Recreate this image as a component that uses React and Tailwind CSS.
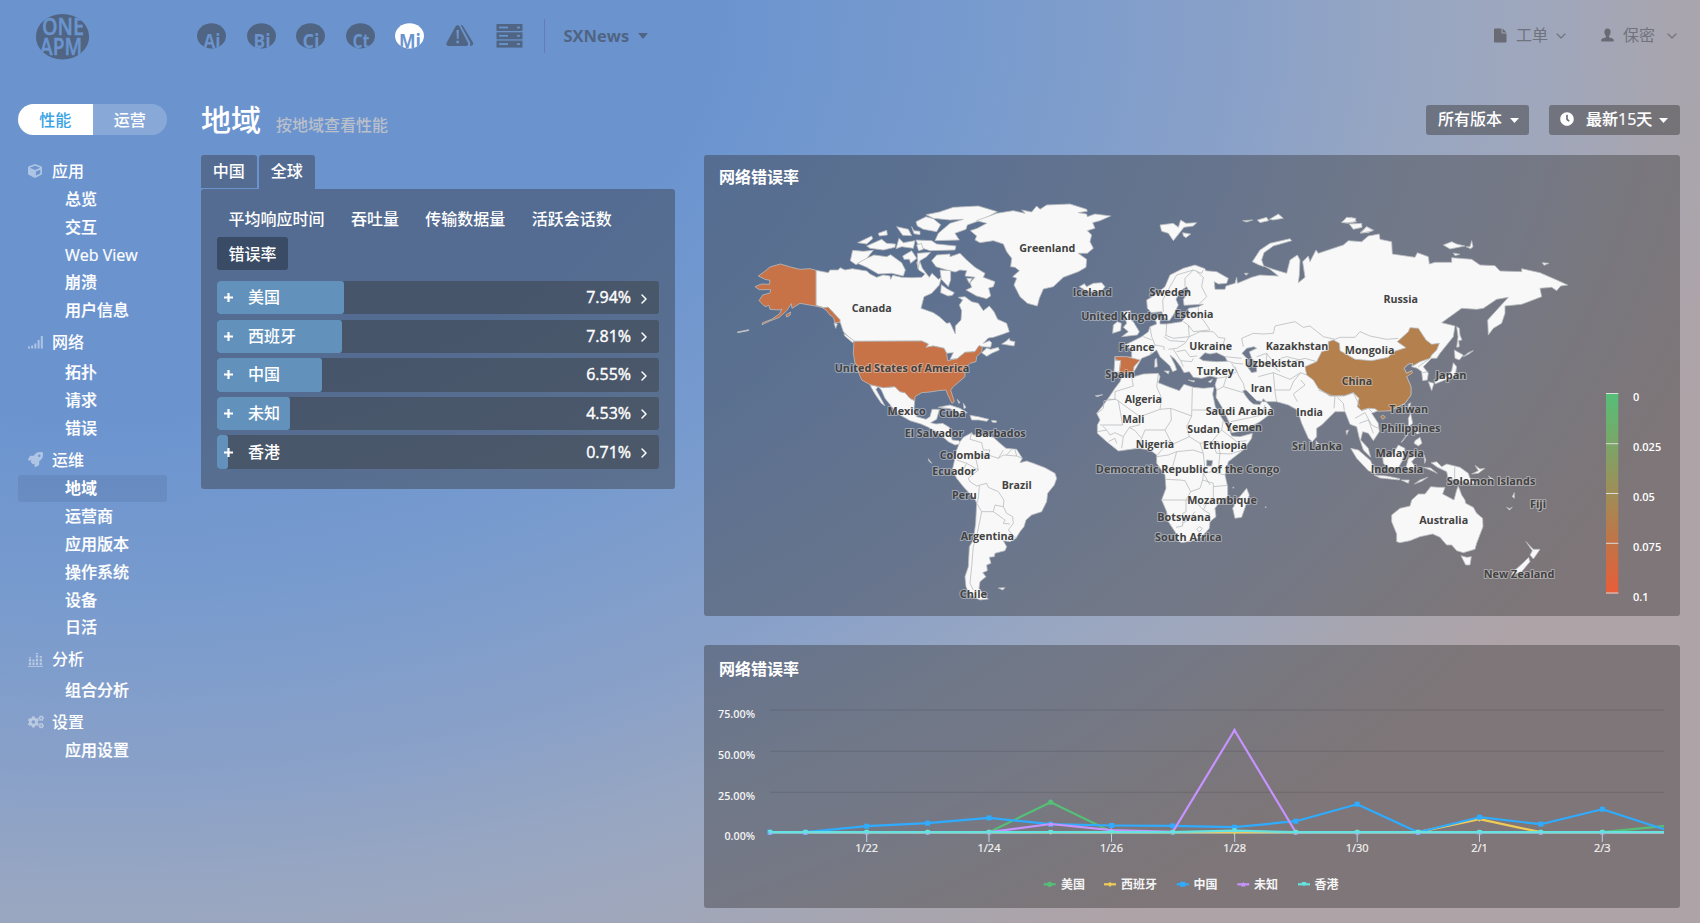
import React from "react";
import { FaCube, FaRocket, FaCogs, FaClock } from "react-icons/fa";
import { ChevronDown, ChevronRight } from "lucide-react";

const FONT = "font-['Open_Sans','Noto_Sans_CJK_SC',sans-serif]";

function Logo() {
  return (
    <svg width="54" height="48" viewBox="35 13 54 48" className="shrink-0">
      <defs>
        <clipPath id="logoClip">
          <ellipse cx="62.5" cy="36.7" rx="26.6" ry="22.8" />
        </clipPath>
      </defs>
      <ellipse cx="62.5" cy="36.7" rx="26.6" ry="22.8" fill="#4f6583" />
      <g clipPath="url(#logoClip)" fill="#6b94cf" stroke="#6b94cf" strokeWidth="0.500" fontFamily="Open Sans, sans-serif" fontWeight="600" fontSize="23">
        <text x="42" y="35" textLength="42" lengthAdjust="spacingAndGlyphs">ONE</text>
        <text x="40" y="55" textLength="42" lengthAdjust="spacingAndGlyphs">APM</text>
      </g>
    </svg>
  );
}

function Badge({ id, label, active }) {
  return (
    <svg width="29" height="26" viewBox="0 0 29 26" className="shrink-0">
      <defs>
        <clipPath id={id}>
          <ellipse cx="14.5" cy="12.8" rx="14.5" ry="12.6" />
        </clipPath>
      </defs>
      <ellipse cx="14.5" cy="12.8" rx="14.5" ry="12.6" fill={active ? "#ffffff" : "#4f6583"} />
      <g clipPath={`url(#${id})`}>
        <text
          x="15" y="24.500" textAnchor="middle" fontFamily="Open Sans, sans-serif" fontWeight="700"
          fontSize="20" fill="#6b94cf" textLength={label === "Mi" ? 22 : 17} lengthAdjust="spacingAndGlyphs"
        >
          {label}
        </text>
      </g>
    </svg>
  );
}

function Header() {
  return (
    <header className="flex h-[67px] items-center pl-[35px] pr-[20px] text-[#4f6583]">
      <div className="pt-[6px]"><Logo /></div>
      <nav className="ml-[108px] flex items-center gap-[20.5px] pt-[5px]">
        <Badge id="b1" label="Ai" />
        <Badge id="b2" label="Bi" />
        <Badge id="b3" label="Ci" />
        <Badge id="b4" label="Ct" />
        <Badge id="b5" label="Mi" active />
        <svg width="29" height="26" viewBox="0 0 29 26">
          <path d="M10.500 3.500 Q12.500 1 14.500 3.500 L23 20 Q24 23 20.500 23 H4 Q0.500 23 1.500 20Z" fill="#4f6583" />
          <path d="M15.800 2.200 Q17 1.500 18 3 L28 19.500 Q29 22.500 25 23 Q25.800 21 25 19Z" fill="#4f6583" />
          <path d="M11.400 7 h2.600 l-.5 9 h-1.600z M11.400 17.700 h2.600 v2.500 h-2.600z" fill="#6b94cf" />
        </svg>
        <svg width="27" height="26" viewBox="0 0 27 26" className="ml-[1.500px]">
          {[1, 9.3, 17.6].map((y, i) => (
            <g key={y}>
              <rect x="0.500" y={y} width="26" height="7" fill="#4f6583" />
              <rect x={i === 1 ? 13.500 : 3} y={y + 2.6} width={i === 1 ? 10 : 9} height="1.800" fill={i === 1 ? "#4f6583" : "#6b94cf"} />
              <rect x={i === 1 ? 3 : 21} y={y + 2.6} width={i === 1 ? 9 : 3} height="1.800" fill="#6b94cf" />
              {i === 1 && <rect x="21" y={y + 2.6} width="3" height="1.800" fill="#6b94cf" />}
            </g>
          ))}
        </svg>
      </nav>
      <div className="ml-[21px] mt-[5px] h-[34px] w-px bg-[#6a79b4]" />
      <div className="ml-[19px] flex items-center gap-[9px] pt-[5px] text-[16.500px] font-bold">
        SXNews
        <svg width="10" height="6" viewBox="0 0 10 6"><path d="M0 0H10L5 6Z" fill="#4f6583" /></svg>
      </div>
      <div className="ml-auto flex items-center pt-[3px] text-[16px] text-[#70727c]">
        <svg width="13" height="15" viewBox="0 0 13 15"><path d="M0 1.500Q0 .5 1 .5H7.500V5.500H12.500V13.500Q12.500 14.500 11.500 14.500H1Q0 14.500 0 13.500ZM8.500 .5L12.500 4.500H8.500Z" fill="#686a74" /></svg>
        <span className="ml-[9px]">工单</span>
        <ChevronDown className="ml-[5px] mt-[2px]" size={16} strokeWidth={1.7} />
        <svg className="ml-[32px]" width="13" height="14" viewBox="0 0 13 14"><path d="M6.500 .5C8.600 .5 9.600 2 9.600 4C9.600 5.800 8.900 7 8 7.900V9.300C9.500 10.200 12.700 10.300 12.700 12V13.500H.3V12C.3 10.300 3.500 10.200 5 9.300V7.900C4.100 7 3.400 5.800 3.400 4C3.400 2 4.400 .5 6.500 .5Z" fill="#686a74" /></svg>
        <span className="ml-[9px]">保密</span>
        <ChevronDown className="ml-[9px] mt-[2px]" size={16} strokeWidth={1.7} />
      </div>
    </header>
  );
}

const SignalIcon = () => (
  <svg width="15" height="14" viewBox="0 0 15 14" fill="currentColor">
    <path d="M0 11.500h2v2h-2zM3.200 10.500h2v3h-2zM6.400 8.500h2v5h-2zM9.600 5h2v8.500h-2zM12.800 1h2v12.500h-2z" />
  </svg>
);
const StatsIcon = () => (
  <svg width="15" height="15" viewBox="0 0 15 15" fill="none" stroke="currentColor">
    <path d="M0 14.400h15" strokeWidth="1" />
    <path d="M2 13V5M5.500 13V7.500M9 13V1M12.800 13V4" strokeWidth="2.200" strokeDasharray="2.600 1" />
  </svg>
);

const groups = [
  { icon: <FaCube size={14} />, title: "应用", tight: true, items: ["总览", "交互", "Web View", "崩溃", "用户信息"] },
  { icon: <SignalIcon />, title: "网络", items: ["拓扑", "请求", "错误"] },
  { icon: <FaRocket size={15} />, title: "运维", tight: true, items: ["地域", "运营商", "应用版本", "操作系统", "设备", "日活"] },
  { icon: <StatsIcon />, title: "分析", items: ["组合分析"] },
  { icon: <FaCogs size={16} />, title: "设置", tight: true, items: ["应用设置"] },
];

function Sidebar() {
  return (
    <aside className="w-[149px] shrink-0 pt-[37px] text-[16px] font-medium text-white">
      <div className="flex h-[31px] overflow-hidden rounded-full text-center leading-[32px]">
        <div className="flex-1 bg-white text-[#3aa4e6]">性能</div>
        <div className="flex-1 bg-white/20">运营</div>
      </div>
      <div className="mt-[17.500px]">
        {groups.map((g) => (
          <div key={g.title} className="pt-[2px]">
            <div className="flex h-8 items-center pl-[10px]">
              <span className="flex w-[24px] text-white/45">{g.icon}</span>
              <span>{g.title}</span>
            </div>
            <ul className={g.tight ? "-mt-[1.4px]" : "mt-[0.5px]"}>
              {g.items.map((it) => (
                <li
                  key={it}
                  className={
                    it === "地域"
                      ? "flex h-[27.8px] items-center rounded-[3px] bg-[#4b6690]/20 pl-[47px] font-bold"
                      : "flex h-[27.8px] items-center pl-[47px] [-webkit-text-stroke:0.2px]"
                  }
                >
                  {it}
                </li>
              ))}
            </ul>
          </div>
        ))}
      </div>
    </aside>
  );
}

const rows = [
  ["美国", "7.94%", 127],
  ["西班牙", "7.81%", 124.5],
  ["中国", "6.55%", 105],
  ["未知", "4.53%", 73],
  ["香港", "0.71%", 11],
];

function RegionTable() {
  return (
    <section className="w-[474px] text-[16px] font-medium text-white">
      <div className="flex h-[34px] gap-[2.500px]">
        <div className="flex h-[33px] w-[55.5px] items-center justify-center rounded-t-[3px] bg-[#302e2c]/38 pb-[2px]">中国</div>
        <div className="flex h-[34px] w-[55.5px] items-center justify-center rounded-t-[3px] bg-[#302e2c]/38 pb-[3px]">全球</div>
      </div>
      <div className="h-[300px] rounded-[3px] bg-[#302e2c]/38 px-4 pt-[13.500px]">
        <div className="flex flex-wrap gap-x-[3.4px] gap-y-[1.5px]">
          {["平均响应时间", "吞吐量", "传输数据量", "活跃会话数", "错误率"].map((m) => (
            <div
              key={m}
              className={
                m === "错误率"
                  ? "flex h-[33px] items-center rounded-[3px] bg-black/30 px-[11.5px]"
                  : "flex h-[33px] items-center px-[11.5px]"
              }
            >
              {m}
            </div>
          ))}
        </div>
        <div className="mt-[11px] flex flex-col gap-[5.2px]">
          {rows.map(([name, val, w]) => (
            <div key={name} className="relative flex h-[33.4px] w-[442px] items-center overflow-hidden rounded-[3px] bg-[#363736]/42">
              <div className="absolute inset-y-0 left-0 rounded-[3px] bg-[#6292bb]" style={{ width: w }} />
              <svg className="relative ml-[7px]" width="9" height="9" viewBox="0 0 9 9"><path d="M4.500 0V9M0 4.500H9" stroke="#fff" strokeWidth="2.200" /></svg>
              <span className="relative -mt-px ml-[15px]">{name}</span>
              <span className="relative -mt-px ml-auto [-webkit-text-stroke:0.4px]">{val}</span>
              <ChevronRight className="relative ml-[5px] mr-[7px] mt-[2px]" size={16} strokeWidth={2.2} />
            </div>
          ))}
        </div>
      </div>
    </section>
  );
}

const NA_LAND = [
  "M288,241 325,248 330,240 355,240 360,233 375,240 397,236 440,243 450,252 470,262 490,255 510,258 512,268 518,256 545,262 575,263 605,262 615,252 596,240 590,217 600,215 607,235 628,262 636,250 655,268 664,262 658,285 635,310 612,320 603,355 640,368 658,380 680,400 690,398 706,432 706,408 723,390 725,362 718,345 728,330 715,322 735,320 755,335 775,340 790,362 808,348 822,365 833,388 860,400 868,425 850,432 820,442 805,444 790,460 808,452 815,458 812,472 785,470 777,467 765,485 735,487 712,506 690,508 700,488 680,490 672,475 640,468 618,472 625,462 605,453 402,454 385,440 370,425 360,395 340,368 325,352 310,353 288,346Z",
  "M398,181 430,184 460,181 438,208 408,224 391,212Z",
  "M462,195 500,200 512,194 545,218 556,240 550,258 515,250 475,252 440,232 412,220 440,205Z",
  "M413,158 455,138 458,146 440,162Z",
  "M440,168 485,148 500,160 526,162 525,172 490,180 450,175Z",
  "M475,130 500,121 502,135 478,138Z",
  "M530,110 565,118 575,137 548,136Z",
  "M575,110 582,122 600,124 600,134 582,131Z",
  "M528,176 537,145 550,158 585,152 580,175 545,170Z",
  "M548,198 575,182 590,205 572,220 568,208 552,208Z",
  "M588,150 635,152 650,162 708,168 705,180 630,182 612,176 594,165Z",
  "M590,165 604,160 610,178 596,182Z",
  "M618,74 658,66 700,52 775,48 832,65 790,88 742,105 738,118 705,130 718,150 645,152 655,130 690,100 730,88 690,90 640,85Z",
  "M588,95 618,80 640,86 662,104 650,125 610,118 592,108Z",
  "M592,190 632,187 620,200 600,212 594,236Z",
  "M635,212 650,195 690,192 690,200 720,190 740,210 765,232 795,250 790,262 825,275 820,290 806,294 812,318 800,326 770,318 738,300 755,292 750,278 765,262 735,258 740,242 720,240 706,246 680,240 648,230Z",
  "M660,240 692,242 692,270 685,290 664,268Z",
  "M740,265 757,265 748,280Z",
  "M664,284 682,297 703,308 697,316 684,318 662,308Z",
  "M868,445 870,452 885,455 882,468 845,462 858,454Z",
  "M372,430 402,452 398,458 374,438Z",
  "M342,398 352,402 347,415Z",
  "M785,488 800,474 812,478 835,472 838,480 815,490 800,499Z",
  "M52,426 87,419 85,422 53,428Z",
  "M450,584 490,593 525,590 540,605 555,608 570,625 584,632 582,660 590,680 618,688 630,680 636,658 658,658 650,688 632,698 648,702 668,700 688,712 690,732 697,750 717,752 725,762 705,765 685,755 655,728 625,712 603,702 570,692 535,672 515,650 495,625 484,600 475,590 468,598 480,620 495,648 484,640 465,612 455,595Z",
  "M655,652 690,645 720,655 742,668 718,670 690,656Z",
  "M750,676 775,680 807,688 800,694 776,690 755,690Z",
  "M815,691 830,693 828,698 816,696Z",
  "M712,628 720,638 716,640Z",
  "M730,640 738,652 732,656Z",
];
const NA_HOT = [
  "M288,241 270,236 240,238 215,232 181,222 150,231 133,245 115,258 135,268 150,271 148,283 125,282 105,290 118,299 152,299 150,309 128,315 117,332 135,350 147,346 150,358 178,360 186,357 178,372 155,388 128,398 126,404 150,393 178,382 200,362 214,341 216,355 240,340 285,348 305,352 318,360 330,375 340,382 345,398 358,398 361,390 340,368 325,352 310,353 288,346Z",
  "M198,374 212,366 210,376 200,381Z",
  "M402,454 605,453 625,462 618,472 640,468 672,475 680,490 683,512 712,506 735,487 765,485 777,467 787,470 785,485 770,500 768,515 750,520 735,535 735,560 700,590 692,600 703,635 696,640 685,618 678,600 655,602 630,606 605,608 585,620 584,632 570,625 555,608 540,605 525,590 490,593 450,584 425,570 405,520 400,490Z",
];
const GREEN = [
  "M391,122 412,115 440,100 410,92 470,70 520,62 555,70 545,60 575,66 590,48 600,58 620,45 690,42 740,58 742,64 715,68 740,72 742,80 765,72 812,78 780,92 758,98 765,115 742,122 755,135 750,155 760,175 742,190 715,190 740,208 738,232 715,245 670,262 640,290 610,297 598,325 592,348 562,340 540,320 522,285 530,265 518,260 538,242 525,232 512,230 515,205 500,185 490,162 460,152 420,158 405,150 410,138Z",
  "M718,290 733,281 740,290 760,280 785,278 795,290 785,302 760,306 735,300Z",
];
const SOUTH = [
  "M300,125 310,112 335,98 340,105 375,105 400,112 420,130 438,145 470,148 487,175 480,188 500,183 520,190 555,203 585,220 590,235 583,255 563,280 560,305 545,335 515,345 498,360 492,380 480,395 468,415 450,425 430,422 440,440 435,452 405,460 403,470 388,472 393,490 380,495 382,512 368,518 378,530 360,545 357,565 375,590 385,597 360,600 330,585 318,560 315,530 325,500 328,440 340,420 347,370 350,310 345,298 310,260 290,235 277,210 285,175 290,150Z",
  "M415,564 435,563 428,570Z",
  "M205,176 215,190 207,184Z",
  "M1160,265 1168,285 1145,352 1125,355 1118,325 1135,295Z",
  "M1118,262 1122,262 1120,265Z",
  "M1216,320 1219,322 1216,323Z",
];
const SOUTH_BORDERS =
  "M335,98 330,118 365,128 370,150 390,150 385,165 345,165 355,210 325,235 330,245 350,258 380,250 385,262 415,275 432,300 430,320 405,315 400,335 365,335 350,310M385,165 415,175 430,150M415,175 430,165 470,168 487,175M455,148 440,165M465,150 470,168M355,210 320,190 290,180M320,190 300,225M358,258 355,295 350,310M430,320 440,340 458,350 460,370 445,390 468,415M400,335 435,360 430,370 450,372M365,335 352,400 340,440 335,500 330,550 340,570";
const OLD_WORLD =
  "M405,225 435,236 437,242 470,245 505,265 500,280 475,282 463,275 465,298 495,298 498,288 525,280 530,262 532,280 575,262 600,255 655,258 630,238 612,228 640,238 680,250 690,210 712,195 720,210 718,255 715,278 735,262 728,215 745,198 750,215 768,180 775,190 850,165 865,152 905,155 925,138 958,132 960,148 995,155 997,192 1065,202 1072,188 1105,200 1108,222 1125,217 1175,217 1175,203 1235,208 1260,225 1305,227 1320,243 1385,245 1385,236 1440,248 1490,270 1523,285 1502,288 1490,302 1475,292 1440,295 1445,320 1385,343 1335,348 1335,370 1325,400 1300,415 1285,435 1283,390 1315,355 1345,322 1310,328 1270,355 1250,358 1205,355 1145,398 1185,408 1180,440 1140,490 1130,505 1115,505 1090,530 1105,550 1102,570 1088,572 1085,545 1072,535 1055,530 1058,520 1045,522 1032,535 1040,550 1055,542 1040,560 1053,590 1053,615 1035,640 990,662 955,662 935,670 955,700 958,725 940,752 925,730 908,725 902,750 925,775 932,802 910,780 898,745 890,710 870,703 855,665 825,665 785,705 770,715 770,740 757,755 745,745 725,700 712,660 685,645 650,635 610,635 590,632 570,612 558,600 548,602 555,615 568,632 580,642 600,644 610,626 630,648 640,665 600,695 550,722 515,728 508,698 485,650 468,622 470,600 465,585 472,563 450,558 425,565 400,562 388,545 372,548 362,530 345,508 330,495 345,525 350,540 338,545 330,528 300,500 290,480 270,495 245,505 222,545 195,550 162,545 165,500 215,502 215,480 195,465 215,455 245,440 265,425 270,410 290,402 285,385 300,382 300,402 320,402 365,395 382,375 385,355 415,350 430,343 372,346 370,328 388,305 380,290 362,302 348,328 355,345 340,375 328,392 315,385 305,365 275,368 262,355 260,330 285,315 315,290 330,255 370,235Z M418,505 435,488 450,492 470,488 495,500 502,514 470,515 430,512Z M546,490 560,475 582,470 590,475 568,485 575,505 590,520 590,545 575,548 562,530 565,510Z";
const AFRICA =
  "M185,562 215,562 250,552 295,550 300,560 295,578 325,590 358,602 372,583 400,592 430,595 462,592 458,612 466,650 486,685 506,715 515,738 540,740 577,730 575,745 550,780 505,815 495,855 503,890 503,920 480,935 465,955 468,980 450,995 448,1015 425,1040 400,1052 365,1058 350,1050 348,1030 325,995 320,965 305,930 318,895 315,855 290,820 290,795 270,780 235,775 175,783 140,755 112,730 112,705 120,690 110,670 130,645 148,620 165,595 180,575Z M440,810 458,812 455,828 440,828Z";
const OLD_ISLANDS = [
  "M190,365 212,362 203,382 220,395 238,425 232,435 185,440 205,425 190,412 200,400Z",
  "M160,405 172,395 184,400 182,422 158,430Z",
  "M300,105 340,100 355,112 362,90 378,100 410,98 400,108 372,112 340,152 325,130 305,124Z",
  "M368,128 392,132 378,143 370,138Z",
  "M577,215 600,180 630,160 690,146 695,152 640,168 612,188 605,210 612,230 595,224Z",
  "M548,92 578,90 560,96Z",
  "M592,90 620,82 626,92 600,98Z",
  "M628,88 655,72 670,85 640,90Z",
  "M845,96 875,82 890,95 862,100Z",
  "M868,102 900,102 905,112 880,116Z",
  "M900,128 920,110 940,120 925,128Z",
  "M553,250 565,250 558,256Z",
  "M285,508 290,505 292,530 284,532Z",
  "M313,543 328,543 325,552Z",
  "M385,570 405,573 400,576Z",
  "M445,575 458,568 452,578Z",
  "M768,752 779,765 770,772Z",
  "M106,617 128,614 112,620Z",
  "M858,722 866,720 860,734Z",
];
const OLD_BORDERS =
  "M310,365 308,330 330,290 350,255 400,240 425,250 430,240M375,290 375,265 400,240M410,245 430,262 425,290 440,320 415,345M380,375 405,370 430,390 450,420 400,425 385,405 370,395M415,352 415,370M385,405 388,440 340,445 315,435M270,410 275,440 285,465 312,470 312,480M250,440 275,450M388,440 420,425 460,425 475,442 495,445 490,462M388,440 375,460 350,475 325,478M285,465 270,495M312,440 330,452 375,455M340,478 362,512 370,530M350,485 375,480 390,500 412,498M362,512 395,515 400,505M320,402 318,435M495,500 545,505M500,512 525,520 550,522M515,520 530,545M165,510 182,512 178,545" +
  "M550,470 545,445 580,430 610,432 640,430 645,408 705,395 730,412 750,408 790,440 825,448 840,442 885,442 900,425 930,438 980,448 1015,445M590,500 620,490 645,522 680,520 735,505 770,515M620,490 620,515 660,545M595,560 640,548 690,568 722,548 740,555M640,548 645,605 650,635M645,600 690,600 700,575 722,548M722,570 735,585 700,612 712,635M525,530 535,555 550,580 555,600M472,565 500,560 530,545M500,560 490,590 468,602M490,590 550,608M512,695 560,685 605,675 615,645M775,600 820,618 850,616M825,620 822,655M832,622 850,640 853,662M853,618 880,608 900,650M885,685 915,668 935,705 955,715M898,700 925,690 940,730M905,660 925,655 938,668M1075,530 1110,505M1088,548 1105,545M662,505 680,500 720,510";
const AFRICA_BORDERS =
  "M215,562 220,588 165,605 165,628 132,632M132,632 130,655 112,670M168,628 145,628M168,628 240,680 300,658 332,655 395,678 397,592M397,660 485,660M295,552 290,590 305,625 300,658M175,632 188,705 120,705M240,680 238,705 208,712 190,740M332,655 334,690 315,720 255,720 245,745M315,720 330,750 305,780 292,795M395,678 380,710 388,740 340,762 330,750M388,740 420,760 455,755 485,720 490,690M455,755 470,790 510,792 550,780M485,720 530,755 560,752M420,760 430,790 435,840 430,850 450,885M350,785 400,780 430,790M290,800 325,795 350,785 338,830 310,850M318,868 360,870 375,872 392,905 378,930 308,930M378,930 378,965 368,970 368,1008 348,1012M392,905 420,895 428,870 460,880 460,935 430,945M428,870 430,850 455,845 495,855M460,890 502,886M378,930 405,932 430,960 448,970 450,995M405,965 385,990 368,1000M430,960 440,940 465,930M112,725 140,720 150,735 165,728 190,740 185,775M140,720 128,708M208,712 225,722 245,745 235,775M170,760 165,745 145,755M410,1018 418,1010 427,1015 418,1026ZM455,755 475,755 480,790 475,835";
const CHINA =
  "M805,455 820,450 838,460 840,482 885,508 935,512 985,502 1000,485 1038,473 1012,455 1045,425 1050,413 1075,415 1098,450 1115,463 1138,460 1130,480 1115,495 1110,505 1080,515 1058,528 1058,520 1045,522 1032,535 1040,550 1055,542 1058,548 1040,560 1053,590 1053,615 1035,640 990,662 955,664 945,656 925,655 905,662 892,650 897,625 880,608 850,618 810,618 775,595 760,570 740,555 735,530 770,515 785,485 805,480Z";
const EAST_ISLANDS = [
  "M5,68 20,52 48,55 45,65 25,68Z",
  "M28,72 65,70 66,82 40,88Z",
  "M62,100 80,80 100,92Z",
  "M310,135 335,125 350,132 375,138 330,147Z",
  "M378,140 390,140 395,122 399,140 392,146Z",
  "M340,159 360,163 345,167Z",
  "M607,188 627,190 612,196Z",
  "M350,380 358,385 360,405 366,420 356,422 358,440 350,442 354,410Z",
  "M343,450 370,465 358,480 345,475Z",
  "M370,470 385,458 400,452 385,463Z",
  "M340,488 350,500 345,530 315,540 285,552 285,542 320,530 335,512Z",
  "M265,545 282,550 275,572Z",
  "M205,612 213,608 205,630Z",
  "M205,655 212,640 218,670 206,680Z",
  "M228,690 238,700 230,702Z",
];
const OCEANIA = [
  "M345,182 360,172 366,190 355,198 342,190Z",
  "M303,187 325,160 308,184Z",
  "M152,205 175,210 212,242 228,282 205,272 170,235Z",
  "M222,285 260,288 300,296 298,300 240,294Z",
  "M303,300 328,300 325,310Z",
  "M343,312 360,300 383,292 365,304Z",
  "M248,232 275,228 295,195 315,205 308,240 295,264 265,262 250,250Z",
  "M318,262 325,235 350,228 335,245 345,260 328,266Z",
  "M372,225 378,240 374,250Z",
  "M370,262 392,264 412,280 390,270Z",
  "M393,248 410,245 425,260 440,252 480,262 505,280 510,295 528,312 495,305 470,300 445,298 440,275 412,262Z",
  "M515,282 535,272 525,256 540,267 555,265 535,280Z",
  "M565,288 580,298 572,296Z",
  "M637,350 643,338 643,355Z",
  "M620,382 628,386 637,382 628,390Z",
  "M392,320 415,322 435,322 428,342 462,360 470,330 475,318 485,345 495,360 497,370 520,382 530,400 548,415 549,440 530,490 525,508 490,518 470,512 455,495 440,495 420,472 398,462 360,470 330,482 300,488 290,485 290,462 275,425 275,405 300,385 330,378 335,360 355,342 375,342Z",
  "M483,527 500,532 514,530 510,555 497,555Z",
  "M678,485 700,508 720,508 712,520 700,537 690,525 697,512Z",
  "M686,532 690,545 665,575 635,585 640,575 670,548Z",
];

const labels = {
  na: [["Canada", 455, 120, 355], ["United States of America", 546, 404, 535], ["Mexico", 560, 115, 664], ["Cuba", 697, 80, 670]],
  gr: [["Greenland", 622, 168, 176], ["Iceland", 757, 118, 306]],
  ow: [
    ["Sweden", 331, 125, 307], ["United Kingdom", 194, 261, 380], ["Estonia", 402, 117, 373], ["France", 230, 107, 473],
    ["Ukraine", 452, 128, 469], ["Kazakhstan", 711, 188, 468], ["Uzbekistan", 644, 180, 521], ["Turkey", 466, 112, 545],
    ["Spain", 180, 88, 553], ["Iran", 604, 64, 595], ["China", 891, 92, 574], ["Algeria", 250, 112, 628],
    ["Saudi Arabia", 539, 204, 664], ["Mali", 220, 66, 688], ["India", 749, 80, 667], ["Sudan", 431, 98, 717],
    ["Yemen", 551, 110, 712], ["Nigeria", 285, 115, 762], ["Ethiopia", 495, 132, 766], ["Sri Lanka", 771, 150, 768],
    ["Democratic Republic of the Congo", 383, 551, 838],
  ],
  ea: [["Russia", 182, 103, 297], ["Mongolia", 89, 149, 452], ["Japan", 333, 93, 527], ["Taiwan", 206, 117, 629], ["Philippines", 212, 179, 684]],
  so: [
    ["El Salvador", 222, 176, 100], ["Barbados", 421, 152, 101], ["Colombia", 315, 152, 165], ["Ecuador", 282, 130, 213],
    ["Brazil", 470, 90, 256], ["Peru", 313, 74, 286], ["Argentina", 382, 160, 409], ["Chile", 340, 82, 583],
    ["Mozambique", 1086, 209, 302], ["Botswana", 972, 160, 352], ["South Africa", 985, 200, 411],
  ],
  oc: [
    ["Malaysia", 299, 145, 219], ["Indonesia", 291, 158, 269], ["Solomon Islands", 573, 266, 304], ["Fiji", 714, 48, 374],
    ["Australia", 431, 147, 421], ["New Zealand", 657, 212, 582],
  ],
};
const T = {
  na: "translate(720 190) scale(.33333)",
  gr: "translate(840 190) scale(.33333)",
  ow: "translate(1060 190) scale(.33333)",
  ea: "translate(1340 200) scale(.33333)",
  so: "translate(860 400) scale(.33333)",
  oc: "translate(1300 380) scale(.33333)",
};

function Shapes({ t, list, fill = "#f8f8f8" }) {
  return (
    <g transform={T[t]} fill={fill} stroke="#b9bbbe" strokeWidth="2.400" strokeLinejoin="round" fillRule="evenodd">
      {list.map((d) => <path key={d} d={d} />)}
    </g>
  );
}

function WorldMap() {
  return (
    <svg className="block" width="976" height="416" viewBox="704 200 976 416">
      <defs>
        <linearGradient id="scale" x1="0" y1="0" x2="0" y2="1">
          <stop offset="0" stopColor="#55bf78" />
          <stop offset="0.5" stopColor="#9f8d57" />
          <stop offset="0.75" stopColor="#c27346" />
          <stop offset="1" stopColor="#e85d38" />
        </linearGradient>
      </defs>
      <Shapes t="na" list={NA_LAND} />
      <Shapes t="na" list={NA_HOT} fill="#c77347" />
      <Shapes t="gr" list={GREEN} />
      <Shapes t="so" list={SOUTH} />
      <Shapes t="ow" list={[OLD_WORLD, AFRICA, ...OLD_ISLANDS]} />
      <Shapes t="ow" list={[CHINA]} fill="#b3804e" />
      <Shapes t="ow" list={["M165,500 200,500 240,510 222,530 220,545 190,552 178,545 182,512 167,510Z"]} fill="#c77347" />
      <Shapes t="ea" list={EAST_ISLANDS} />
      <Shapes t="ea" list={["M122,650 130,645 136,652 128,658Z"]} fill="#b3804e" />
      <Shapes t="oc" list={OCEANIA} />
      <Shapes t="ow" list={[OLD_BORDERS, AFRICA_BORDERS]} fill="none" />
      <Shapes t="so" list={[SOUTH_BORDERS]} fill="none" />
      <Shapes t="oc" list={["M464,262V300"]} fill="none" />
      {Object.keys(labels).map((k) => (
        <g
          key={k} transform={T[k]} fontFamily="Open Sans, sans-serif" fontSize="32.500" fontWeight="700" fill="#424242"
          stroke="#f8f8f8" strokeOpacity="0.4" strokeWidth="6" strokeLinejoin="round" paintOrder="stroke" textAnchor="middle"
        >
          {labels[k].map(([s, x, w, y]) => (
            <text key={s} x={x} y={y + 11} textLength={w} lengthAdjust="spacingAndGlyphs">{s}</text>
          ))}
        </g>
      ))}
      <rect x="1606" y="393" width="12.300" height="200.500" fill="url(#scale)" />
      {[["0", 393.5], ["0.025", 443.7], ["0.05", 493.5], ["0.075", 543.3], ["0.1", 593]].map(([s, y]) => (
        <g key={s}>
          <path d={`M1606 ${y}h12.300`} stroke="#dcdcdc" strokeWidth="1" />
          <text x="1633" y={y + 7.5} fontFamily="Open Sans, sans-serif" fontSize="11" fontWeight="600" fill="#fff">{s}</text>
        </g>
      ))}
    </svg>
  );
}

const X0 = [770, 805.5, 866.7, 927.7, 989, 1050.7, 1111.5, 1172.8, 1234.5, 1295.8, 1357.2, 1418, 1479.5, 1540.8, 1602.3, 1664];
const series = [
  ["#55bf78", [0, 0, 0, 0, 0, 30, 0.5, 0, 0.5, 0, 0, 0, 0, 0, 0, 6]],
  ["#f0cb58", [0, 0, 0, 0, 0, 0, 0, 0, 0, 0, 0, 0, 13, 0, 0, 0]],
  ["#2fabff", [0, 0, 6, 9, 14.3, 8, 6.7, 6.3, 5, 11, 28, 0, 15, 8, 23, 3]],
  ["#c693ff", [0, 0, 0, 0, 0, 8.2, 2, 0.3, 102, 0, 0, 0, 0, 0, 0, 0]],
  ["#66e3e0", [0, 0, 0, 0, 0, 0, 0, 0, 1.6, 0, 0, 0, 0, 0, 0, 0]],
];
const legend = [
  ["美国", "#55bf78", 1043.7, 1061],
  ["西班牙", "#f0cb58", 1104, 1121],
  ["中国", "#2fabff", 1176.7, 1193.5],
  ["未知", "#c693ff", 1237.3, 1254],
  ["香港", "#66e3e0", 1298, 1314.5],
];

function Marker({ kind, x, y, color }) {
  if (kind === 0) return <circle cx={x} cy={y} r="2.600" fill={color} />;
  if (kind === 1) return <path d={`M${x} ${y - 2.6}l2.200 2.600l-2.200 2.600l-2.200 -2.600z`} fill={color} />;
  if (kind === 2) return <rect x={x - 2.5} y={y - 2.5} width="5" height="5" fill={color} />;
  if (kind === 3) return <path d={`M${x - 2.4} ${y + 2.3}L${x} ${y - 2.6}L${x + 2.4} ${y + 2.3}z`} fill={color} />;
  return <path d={`M${x - 2.5} ${y - 2.3}h5l-2.500 4.800z`} fill={color} />;
}

function LineChart() {
  const base = 832.2;
  return (
    <svg className="block" width="976" height="213" viewBox="704 695 976 213" fontFamily="Open Sans, Noto Sans CJK SC, sans-serif" fill="#f4f4f4">
      {[710, 751.3, 792.3].map((y) => <path key={y} d={`M770 ${y}H1664`} stroke="#3c3c40" strokeOpacity="0.22" strokeWidth="1" />)}
      {[["75.00%", 714.7], ["50.00%", 755], ["25.00%", 796], ["0.00%", 836.3]].map(([s, y]) => (
        <text key={s} x="755" y={y + 3.6} textAnchor="end" fontSize="11" fontWeight="600" textLength={s === "0.00%" ? 30.5 : 37} lengthAdjust="spacingAndGlyphs">{s}</text>
      ))}
      <path d="M770 833H1664" stroke="#c0d0e0" strokeWidth="1.200" />
      {[["1/22", 866.7], ["1/24", 989], ["1/26", 1111.5], ["1/28", 1234.7], ["1/30", 1357.2], ["2/1", 1479.5], ["2/3", 1602.3]].map(([s, x]) => (
        <g key={s}>
          <path d={`M${x} 833v9`} stroke="#c0d0e0" strokeWidth="1" />
          <text x={x} y="852" textAnchor="middle" fontSize="11" fontWeight="500" stroke="#f4f4f4" strokeWidth="0.200">{s}</text>
        </g>
      ))}
      {series.map(([c, v], k) => (
        <g key={c}>
          <polyline points={v.map((p, i) => `${X0[i]},${base - p}`).join(" ")} fill="none" stroke={c} strokeWidth="2.200" strokeLinejoin="round" />
          {v.slice(0, -1).map((p, i) => <Marker key={i} kind={k} x={X0[i]} y={base - p} color={c} />)}
        </g>
      ))}
      {legend.map(([s, c, mx, tx], k) => (
        <g key={s}>
          <path d={`M${mx} 884.300h12`} stroke={c} strokeWidth="2.200" />
          <Marker kind={k} x={mx + 6} y={884.3} color={c} />
          <text x={tx} y="888.500" fontSize="12" fontWeight="600">{s}</text>
        </g>
      ))}
    </svg>
  );
}

const Caret = () => (
  <svg width="9" height="5" viewBox="0 0 9 5" className="mt-[4px]"><path d="M0 0H9L4.500 5Z" fill="#fff" /></svg>
);

export default function App() {
  return (
    <div
      className={`h-[923px] w-[1700px] overflow-hidden bg-[radial-gradient(ellipse_1700px_1150px_at_100px_0px,#6b94cf_0%,#6b94cf_36%,#789bce_52%,#8aa1c8_68%,#97a6c2_77%,#a0a7bb_86%,#a7a5af_92%,#ada4a9_98%,#aea3a7_100%)] ${FONT}`}
    >
      <Header />
      <div className="flex pl-[18px]">
        <Sidebar />
        <main className="ml-[34px] w-[1479px] shrink-0">
          <div className="flex h-[88px] items-start pt-[30.500px] text-white">
            <h1 className="text-[30px] font-medium leading-[43px]">地域</h1>
            <span className="ml-[15px] mt-[15px] text-[16px] font-medium leading-[24px] text-[#b9bfcb]">按地域查看性能</span>
            <div className="ml-auto mt-[7px] flex gap-[20px] text-[16px] font-medium">
              <div className="flex h-[30px] w-[103px] items-center gap-[8px] rounded-[3px] bg-[#302e2c]/42 pb-[2px] pl-[12px]">所有版本<Caret /></div>
              <div className="flex h-[30px] w-[131px] items-center rounded-[3px] bg-[#302e2c]/42 pb-[2px] pl-[11px]">
                <FaClock size={14} />
                <span className="ml-[12px] mr-[7px] [-webkit-text-stroke:0.2px]">最新15天</span>
                <Caret />
              </div>
            </div>
          </div>
          <div className="flex items-start justify-between">
            <RegionTable />
            <div className="flex w-[976px] flex-col gap-[29px]">
              <section className="h-[461px] rounded-[3px] bg-[#302e2c]/38">
                <h2 className="h-[45px] pl-[15px] text-[16px] font-bold leading-[45px] text-white">网络错误率</h2>
                <WorldMap />
              </section>
              <section className="h-[263px] rounded-[3px] bg-[#302e2c]/38">
                <h2 className="h-[50px] pl-[15px] text-[16px] font-bold leading-[49px] text-white">网络错误率</h2>
                <LineChart />
              </section>
            </div>
          </div>
        </main>
      </div>
    </div>
  );
}
